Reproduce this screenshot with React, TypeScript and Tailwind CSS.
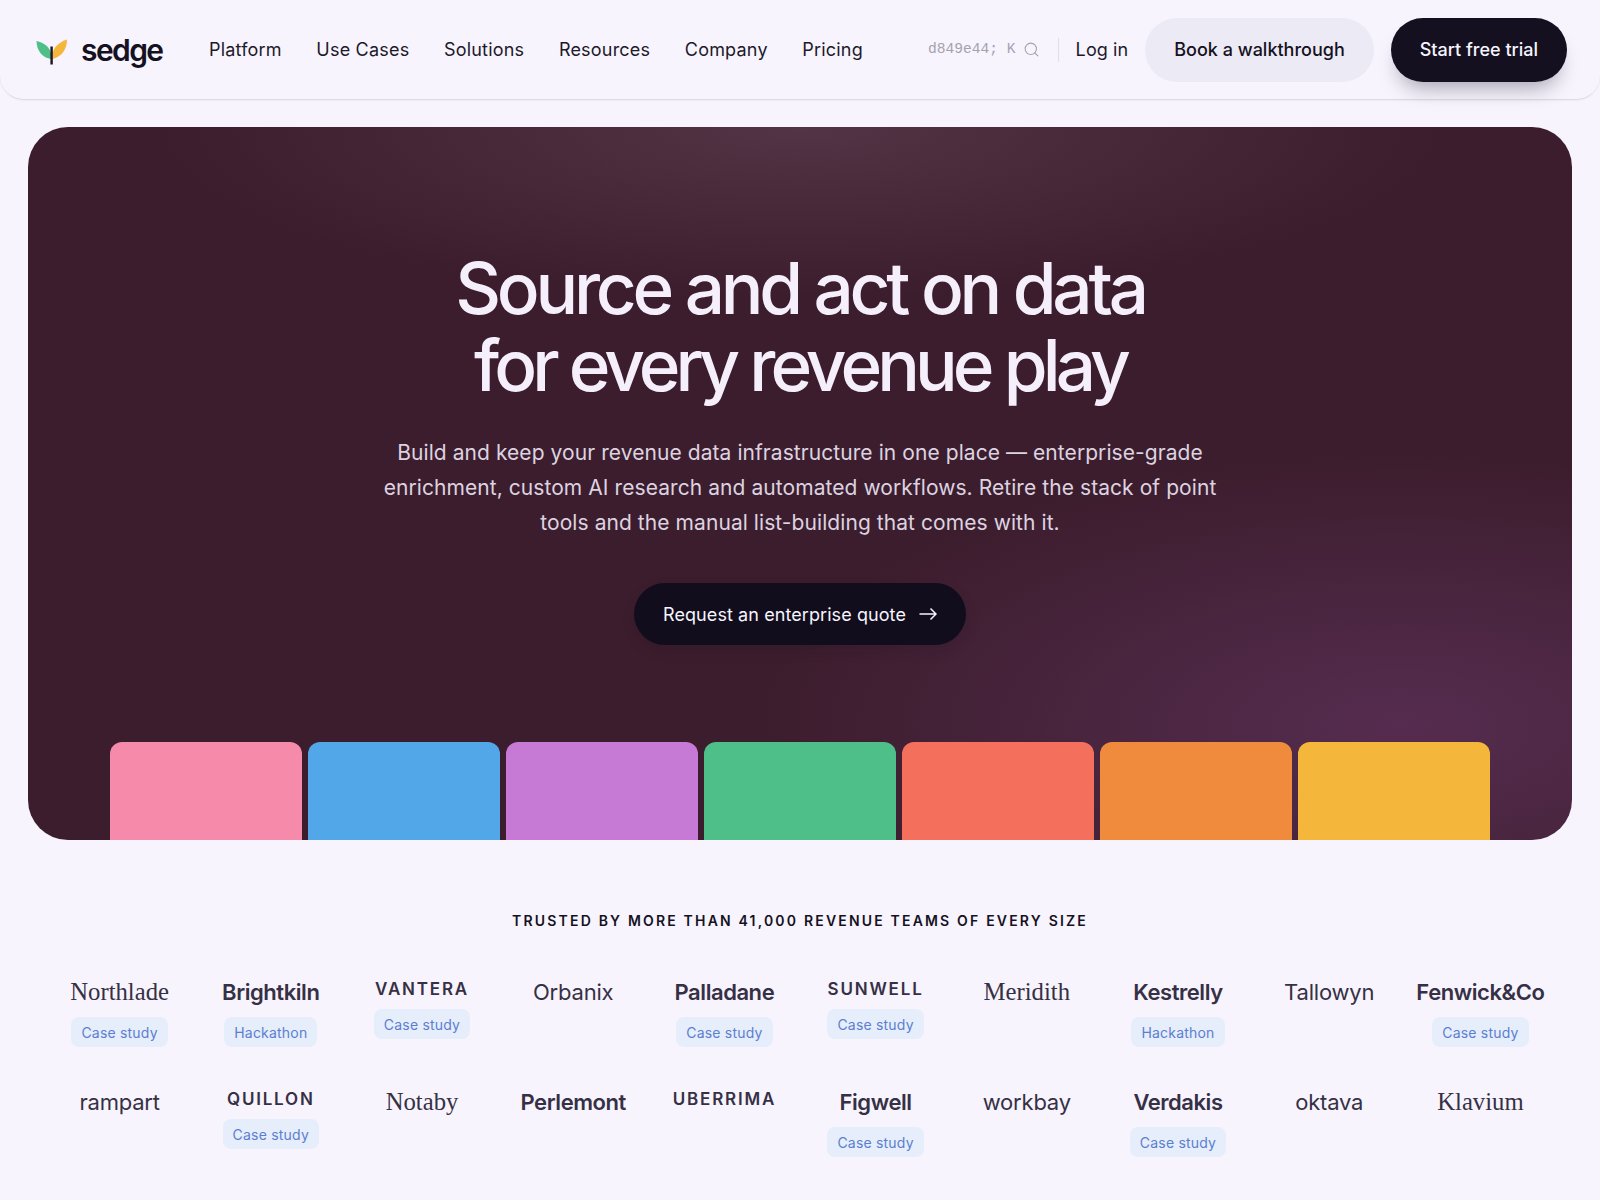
import React from "react";
import { Search } from "lucide-react";

const tiles = ["bg-[#f58aab]", "bg-[#52a7e9]", "bg-[#c67ad6]", "bg-[#4fbf8a]", "bg-[#f5705c]", "bg-[#f08a3c]", "bg-[#f5b73b]"];

type Kind = "serif" | "bold" | "caps" | "plain";
type Logo = { name: string; kind: Kind; tag?: string };

const row1: Logo[] = [
  { name: "Northlade", kind: "serif", tag: "Case study" },
  { name: "Brightkiln", kind: "bold", tag: "Hackathon" },
  { name: "VANTERA", kind: "caps", tag: "Case study" },
  { name: "Orbanix", kind: "plain" },
  { name: "Palladane", kind: "bold", tag: "Case study" },
  { name: "SUNWELL", kind: "caps", tag: "Case study" },
  { name: "Meridith", kind: "serif" },
  { name: "Kestrelly", kind: "bold", tag: "Hackathon" },
  { name: "Tallowyn", kind: "plain" },
  { name: "Fenwick&Co", kind: "bold", tag: "Case study" },
];
const row2: Logo[] = [
  { name: "rampart", kind: "plain" },
  { name: "QUILLON", kind: "caps", tag: "Case study" },
  { name: "Notaby", kind: "serif" },
  { name: "Perlemont", kind: "bold" },
  { name: "UBERRIMA", kind: "caps" },
  { name: "Figwell", kind: "bold", tag: "Case study" },
  { name: "workbay", kind: "plain" },
  { name: "Verdakis", kind: "bold", tag: "Case study" },
  { name: "oktava", kind: "plain" },
  { name: "Klavium", kind: "serif" },
];

const kindClass: Record<Kind, string> = {
  serif: "font-['Liberation_Serif',serif] text-[24.7px] leading-[36px] font-normal h-[36px]",
  bold: "text-[22px] leading-[36px] font-semibold tracking-[-0.44px] h-[36px]",
  caps: "mt-[2px] text-[17px] leading-[26px] font-semibold tracking-[1.8px] h-[26px]",
  plain: "text-[22px] leading-[36px] font-normal tracking-[-0.2px] h-[36px]",
};

function LogoCell({ logo }: { logo: Logo }) {
  return (
    <div className="flex flex-col items-center">
      <span className={`text-[#363044] whitespace-nowrap ${kindClass[logo.kind]}`}>{logo.name}</span>
      {logo.tag && (
        <span className="mt-[7px] rounded-[8px] bg-[#e6edfb] px-[10px] h-[30px] flex items-center text-[14px] text-[#5b7fd0] tracking-[0.2px] whitespace-nowrap">
          {logo.tag}
        </span>
      )}
    </div>
  );
}

function Leaf() {
  return (
    <svg width="32" height="26" viewBox="0 0 32 26" fill="none" className="mt-[4px]">
      <path d="M0.5 2 C8 3.5 14 8.5 15 14.5 L15 20 C7 19 0.5 12 0.5 2 Z" fill="#4fbf8a" />
      <path d="M31 0.5 C23 3 17.5 8.5 16.5 14.5 L16.5 20 C25 18 31 11 31 0.5 Z" fill="#f5b73b" />
      <rect x="14.4" y="7.5" width="2.4" height="18" fill="#1b1626" />
    </svg>
  );
}

export default function App() {
  return (
    <div className="min-h-[1200px] bg-[#f7f4fe] font-['Inter',sans-serif] overflow-hidden">
      <header className="h-[100px] rounded-b-[24px] border-b border-[#dcdae4] flex items-center pl-[36px] pr-[33px] shadow-[0_1px_2px_rgba(20,16,40,0.04)]">
        <div className="flex items-center gap-[13px] w-[173px]">
          <Leaf />
          <span className="text-[30px] font-semibold tracking-[-1.6px] text-[#15111f] leading-none">sedge</span>
        </div>
        <nav className="flex items-center gap-[34.6px] text-[18px] tracking-[0.2px] text-[#1d1929] leading-none">
          <span>Platform</span>
          <span>Use Cases</span>
          <span>Solutions</span>
          <span>Resources</span>
          <span>Company</span>
          <span>Pricing</span>
        </nav>
        <div className="ml-auto flex items-center">
          <span className="font-['Liberation_Mono',monospace] text-[14.6px] text-[#a5a2ae] whitespace-pre leading-none">d849e44; K</span>
          <Search className="ml-[7px] text-[#a5a2ae]" size={17} strokeWidth={1.5} />
          <span className="ml-[18px] mr-[17px] w-px h-[24px] bg-[#e0dee8]" />
          <span className="text-[18px] tracking-[0.1px] text-[#1d1929] mr-[17px]">Log in</span>
          <span className="h-[64px] rounded-full bg-[#ecebf5] px-[29px] flex items-center text-[18px] font-medium text-[#15111f] mr-[17px]">
            Book a walkthrough
          </span>
          <span className="h-[64px] rounded-full bg-[#14101f] px-[29px] flex items-center text-[18px] font-medium text-[#f6f4fe] shadow-[0_14px_20px_-8px_rgba(20,16,31,0.35)]">
            Start free trial
          </span>
        </div>
      </header>

      <main className="px-[28px] pt-[27px]">
        <section className="h-[713px] rounded-[40px] overflow-hidden bg-[#3c1d2d] bg-[radial-gradient(ellipse_640px_170px_at_50%_0%,rgba(112,80,100,0.44),transparent),radial-gradient(ellipse_640px_270px_at_89%_84%,rgba(92,48,88,0.8),transparent)] flex flex-col items-center pt-[123px]">
          <h1 className="text-[71px] leading-[77px] font-medium text-[#f5effc] text-center">
            <span className="block tracking-[-4.25px]">Source and act on data</span>
            <span className="block tracking-[-4.9px]">for every revenue play</span>
          </h1>
          <p className="mt-[31px] text-[21px] leading-[35px] tracking-[0.07px] text-[#ddd3e0] text-center w-[860px]">
            Build and keep your revenue data infrastructure in one place — enterprise-grade enrichment, custom AI research and automated workflows. Retire the stack of point tools and the manual list-building that comes with it.
          </p>
          <span className="mt-[43px] h-[62px] rounded-full bg-[#120d1c] px-[29px] flex items-center gap-[13px] text-[18px] font-normal tracking-[0.08px] text-[#f6f4fe] shadow-[0_6px_14px_rgba(20,16,31,0.12)]">
            Request an enterprise quote
            <svg width="18" height="14" viewBox="0 0 18 14" fill="none" stroke="currentColor" strokeWidth="1.5">
              <path d="M0.5 7 H17 M11.5 1.5 L17 7 L11.5 12.5" />
            </svg>
          </span>
          <div className="mt-auto w-[1380px] h-[98px] grid grid-cols-7 gap-[6px]">
            {tiles.map((t) => (
              <div key={t} className={`${t} rounded-t-[12px]`} />
            ))}
          </div>
        </section>

        <section className="pt-[71px]">
          <p className="text-center text-[14px] font-semibold tracking-[2.18px] text-[#15111f] leading-[20px]">
            TRUSTED BY MORE THAN 41,000 REVENUE TEAMS OF EVERY SIZE
          </p>
          <div className="mt-[43px] grid grid-cols-10 gap-y-[37px] w-[1512px] mx-auto items-start">
            {[...row1, ...row2].map((l) => (
              <LogoCell key={l.name} logo={l} />
            ))}
          </div>
        </section>
      </main>
    </div>
  );
}
